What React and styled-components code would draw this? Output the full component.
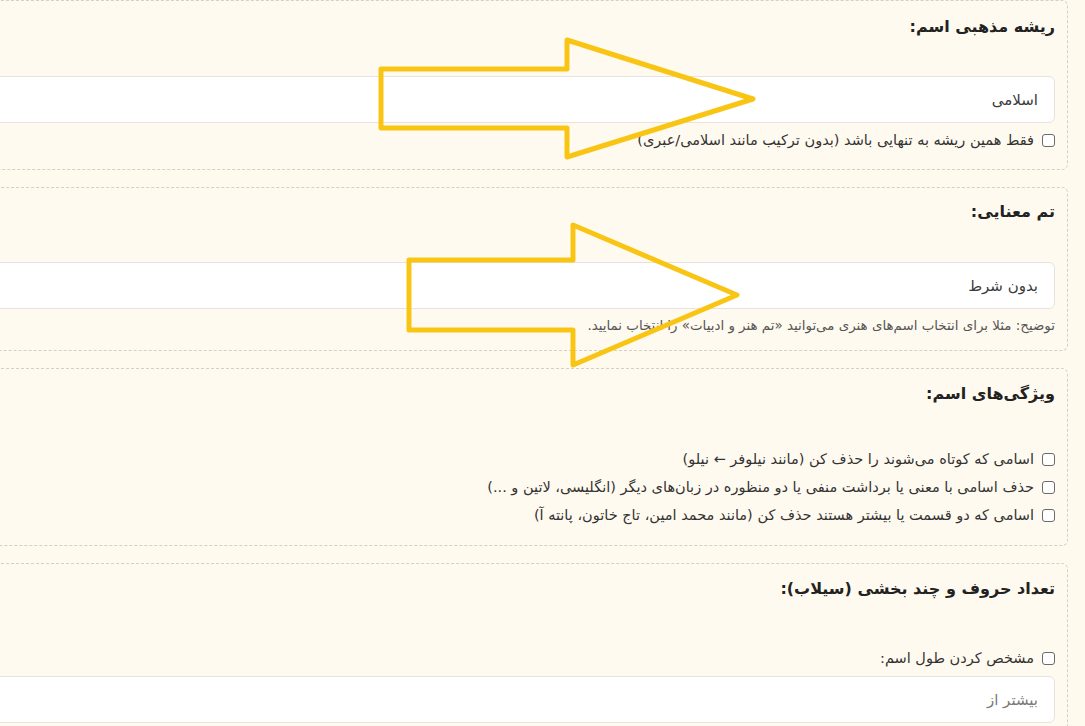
import React from "react";
import styled, { createGlobalStyle } from "styled-components";

const GlobalStyle = createGlobalStyle`
  html, body {
    margin: 0;
    padding: 0;
    background: #fffaee;
    overflow: hidden;
  }
  body {
    font-family: "DejaVu Sans", "Noto Sans", sans-serif;
  }
`;

const features = [
  "اسامی که کوتاه می‌شوند را حذف کن (مانند نیلوفر ← نیلو)",
  "حذف اسامی با معنی یا برداشت منفی یا دو منظوره در زبان‌های دیگر (انگلیسی، لاتین و ...)",
  "اسامی که دو قسمت یا بیشتر هستند حذف کن (مانند محمد امین، تاج خاتون، پانته آ)",
];

const Check = ({ label, $after = 0 }) => (
  <CheckRow $after={$after}>
    <Box type="checkbox" />
    <span>{label}</span>
  </CheckRow>
);

const App = () => {
  return (
    <>
      <GlobalStyle />
      <Page>
        <Card $top={14} $bottom={20}>
          <Title $space={37}>ریشه مذهبی اسم:</Title>
          <Field readOnly value="اسلامی" />
          <Check label="فقط همین ریشه به تنهایی باشد (بدون ترکیب مانند اسلامی/عبری)" />
        </Card>

        <Card $top={12} $bottom={15}>
          <Title $space={38}>تم معنایی:</Title>
          <Field readOnly value="بدون شرط" />
          <Hint>
            توضیح: مثلا برای انتخاب اسم‌های هنری می‌توانید «تم هنر و ادبیات» را انتخاب نمایید.
          </Hint>
        </Card>

        <Card $top={13} $bottom={21}>
          <Title $space={44}>ویژگی‌های اسم:</Title>
          <CheckList>
            {features.map((f) => (
              <Check key={f} label={f} />
            ))}
          </CheckList>
        </Card>

        <Card $top={13} $bottom={20}>
          <Title $space={48}>تعداد حروف و چند بخشی (سیلاب):</Title>
          <Check label="مشخص کردن طول اسم:" $after={9} />
          <Field placeholder="بیشتر از" />
        </Card>

        {/* annotation arrows drawn over the form */}
        <Arrows width="1085" height="726" viewBox="0 0 1085 726">
          <polygon points="381,69 567,69 567,40 753,99 567,157 567,128 381,128" />
          <polygon points="409,260 573,260 573,225 737,295 573,365 573,330 409,330" />
        </Arrows>
      </Page>
    </>
  );
};

export default App;

// Styled Components
const Page = styled.div`
  position: relative;
  direction: rtl;
  display: flex;
  flex-direction: column;
  gap: 17px;
  width: calc(100% + 100px);
  margin-left: -100px;
  padding-right: 17px;
  box-sizing: border-box;
  color: #2b2b2b;
`;

const Card = styled.section`
  display: flex;
  flex-direction: column;
  padding: ${({ $top }) => $top}px 12px ${({ $bottom }) => $bottom}px;
  border: 1px dashed #d5d0c4;
  border-radius: 6px;
  background: #fffaef;
`;

const Title = styled.h3`
  margin: 0 0 ${({ $space }) => $space}px;
  font-size: 16px;
  line-height: 24px;
  font-weight: 700;
  color: #222;
`;

const Field = styled.input`
  height: 47px;
  box-sizing: border-box;
  padding: 0 16px;
  border: 1px solid #e7e3da;
  border-radius: 6px;
  background: #fff;
  font-family: inherit;
  font-size: 15px;
  color: #3a3a3a;
  direction: rtl;
  outline: none;

  &::placeholder {
    color: #7a7a7a;
  }
`;

const CheckRow = styled.label`
  display: flex;
  align-items: center;
  gap: 8px;
  height: 18px;
  margin: 8px 0 ${({ $after }) => $after}px;
  font-size: 14.5px;
  line-height: 18px;
  color: #333;
  white-space: nowrap;

  ${Title} + & {
    margin-top: 0;
  }
`;

const CheckList = styled.div`
  display: flex;
  flex-direction: column;
  gap: 10px;

  ${CheckRow} {
    margin: 0;
  }
`;

const Box = styled.input`
  appearance: none;
  flex: none;
  width: 13px;
  height: 13px;
  margin: 0;
  border: 1px solid #6b6b6b;
  border-radius: 3px;
  background: #fff;
`;

const Hint = styled.p`
  margin: 8px 0 0;
  font-size: 13.4px;
  line-height: 18px;
  color: #555;
`;

const Arrows = styled.svg`
  position: absolute;
  top: 0;
  left: 100px;
  pointer-events: none;

  polygon {
    fill: none;
    stroke: #f9c515;
    stroke-width: 5;
    stroke-linejoin: round;
  }
`;
